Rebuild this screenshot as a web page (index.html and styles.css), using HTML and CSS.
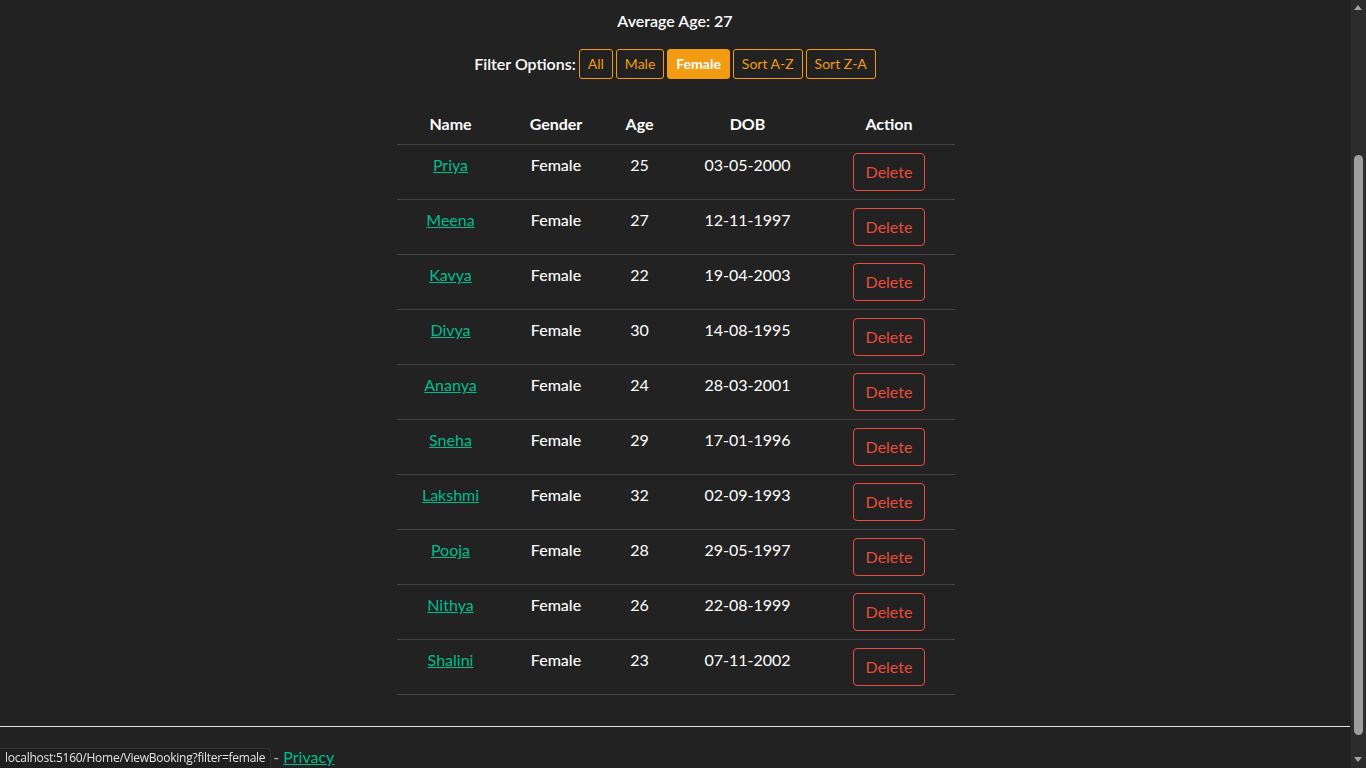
FILE: index.html
```html
<!DOCTYPE html>
<html lang="en">
<head>
<meta charset="utf-8">
<title>View Booking</title>
<link rel="stylesheet" href="styles.css">
</head>
<body>
<div class="page">
  <main class="content">
    <p class="avg">Average Age: 27</p>
    <div class="filters">
      <span class="filter-label">Filter Options:</span>
      <a class="fbtn" href="#">All</a>
      <a class="fbtn" href="#">Male</a>
      <a class="fbtn active" href="#">Female</a>
      <a class="fbtn" href="#">Sort A-Z</a>
      <a class="fbtn" href="#">Sort Z-A</a>
    </div>
    <table class="people">
      <thead>
        <tr>
          <th class="c-name">Name</th>
          <th class="c-gender">Gender</th>
          <th class="c-age">Age</th>
          <th class="c-dob">DOB</th>
          <th class="c-action">Action</th>
        </tr>
      </thead>
      <tbody>
        <tr><td><a href="#">Priya</a></td><td class="g">Female</td><td>25</td><td>03-05-2000</td><td><button class="del">Delete</button></td></tr>
        <tr><td><a href="#">Meena</a></td><td class="g">Female</td><td>27</td><td>12-11-1997</td><td><button class="del">Delete</button></td></tr>
        <tr><td><a href="#">Kavya</a></td><td class="g">Female</td><td>22</td><td>19-04-2003</td><td><button class="del">Delete</button></td></tr>
        <tr><td><a href="#">Divya</a></td><td class="g">Female</td><td>30</td><td>14-08-1995</td><td><button class="del">Delete</button></td></tr>
        <tr><td><a href="#">Ananya</a></td><td class="g">Female</td><td>24</td><td>28-03-2001</td><td><button class="del">Delete</button></td></tr>
        <tr><td><a href="#">Sneha</a></td><td class="g">Female</td><td>29</td><td>17-01-1996</td><td><button class="del">Delete</button></td></tr>
        <tr><td><a href="#">Lakshmi</a></td><td class="g">Female</td><td>32</td><td>02-09-1993</td><td><button class="del">Delete</button></td></tr>
        <tr><td><a href="#">Pooja</a></td><td class="g">Female</td><td>28</td><td>29-05-1997</td><td><button class="del">Delete</button></td></tr>
        <tr><td><a href="#">Nithya</a></td><td class="g">Female</td><td>26</td><td>22-08-1999</td><td><button class="del">Delete</button></td></tr>
        <tr><td><a href="#">Shalini</a></td><td class="g">Female</td><td>23</td><td>07-11-2002</td><td><button class="del">Delete</button></td></tr>
      </tbody>
    </table>
  </main>
  <footer class="footer">
    <div class="footer-inner"><span class="brand">&copy; 2025 - StudentBooking</span> - <a href="#">Privacy</a></div>
  </footer>
</div>
<div class="statusbar">localhost:5160/Home/ViewBooking?filter=female</div>
<div class="scrollbar">
  <span class="arrow up"></span>
  <span class="thumb"></span>
  <span class="arrow down"></span>
</div>
</body>
</html>
```
FILE: styles.css
```css
html, body {
  margin: 0;
  padding: 0;
  height: 100%;
  overflow: hidden;
  background: #222222;
}
body {
  font-family: Lato, "Liberation Sans", sans-serif;
  font-size: 16px;
  line-height: 1.5;
  color: #ffffff;
}
.page {
  width: 1350px;
  height: 768px;
  display: flex;
  flex-direction: column;
}
.content {
  flex: 1;
  display: flex;
  flex-direction: column;
  align-items: center;
}
.avg {
  margin: 9px 0 0;
  font-size: 16px;
  font-weight: 600;
  line-height: 24px;
}
.filters {
  margin-top: 16px;
  display: flex;
  align-items: center;
  gap: 3px;
}
.filter-label {
  font-size: 16px;
  font-weight: 600;
}
.fbtn {
  display: inline-block;
  box-sizing: border-box;
  height: 30px;
  padding: 0 8px;
  line-height: 28px;
  font-size: 14px;
  color: #f39c12;
  border: 1px solid #f39c12;
  border-radius: 3px;
  text-decoration: none;
}
.fbtn.active {
  background: #f39c12;
  color: #ffffff;
  font-weight: 700;
}
.people {
  margin-top: 25px;
  margin-left: 1px;
  width: 558px;
  table-layout: fixed;
  border-collapse: collapse;
  text-align: center;
}
.people th, .people td {
  padding: 8px;
  vertical-align: top;
  border-bottom: 1px solid #444444;
}
.people th {
  font-weight: 700;
}
.c-name { width: 92px; }
.c-gender { width: 87px; }
.c-age { width: 48px; }
.c-dob { width: 136px; }
.c-action { width: 115px; }
.people td.g {
  font-weight: 500;
}
.people a {
  color: #00bc8c;
  text-decoration: underline;
}
.del {
  font-family: inherit;
  font-size: 16px;
  line-height: 24px;
  padding: 6px 12px;
  color: #e74c3c;
  background: transparent;
  border: 1px solid #e74c3c;
  border-radius: 4px;
  cursor: pointer;
}
.footer {
  border-top: 1px solid #dee2e6;
  height: 42px;
  box-sizing: border-box;
}
.footer-inner {
  padding-left: 88px;
  padding-top: 18px;
  font-size: 16px;
  line-height: 24px;
  color: #adb5bd;
}
.footer-inner a {
  color: #00bc8c;
}
.statusbar {
  position: fixed;
  left: 0;
  bottom: 0;
  box-sizing: border-box;
  height: 20px;
  width: 271px;
  padding: 0 0 0 5px;
  background: #1f1f1f;
  border-top: 1px solid #333333;
  border-right: 1px solid #333333;
  border-top-right-radius: 4px;
  font-family: "Open Sans", "Noto Sans", sans-serif;
  font-size: 12px;
  letter-spacing: -0.25px;
  line-height: 18px;
  color: #e3e3e3;
  white-space: nowrap;
  overflow: hidden;
}
.scrollbar {
  position: fixed;
  top: 0;
  right: 0;
  width: 15px;
  height: 768px;
  background: #2c2c2c;
  border-left: 1px solid #262626;
}
.thumb {
  position: absolute;
  left: 3px;
  top: 155px;
  width: 9px;
  height: 580px;
  border-radius: 5px;
  background: #9e9e9e;
}
.arrow {
  position: absolute;
  left: 3px;
  width: 0;
  height: 0;
  border-left: 4.5px solid transparent;
  border-right: 4.5px solid transparent;
}
.arrow.up {
  top: 5px;
  border-bottom: 5px solid #a3a3a3;
}
.arrow.down {
  top: 757px;
  border-top: 5px solid #a3a3a3;
}
```
